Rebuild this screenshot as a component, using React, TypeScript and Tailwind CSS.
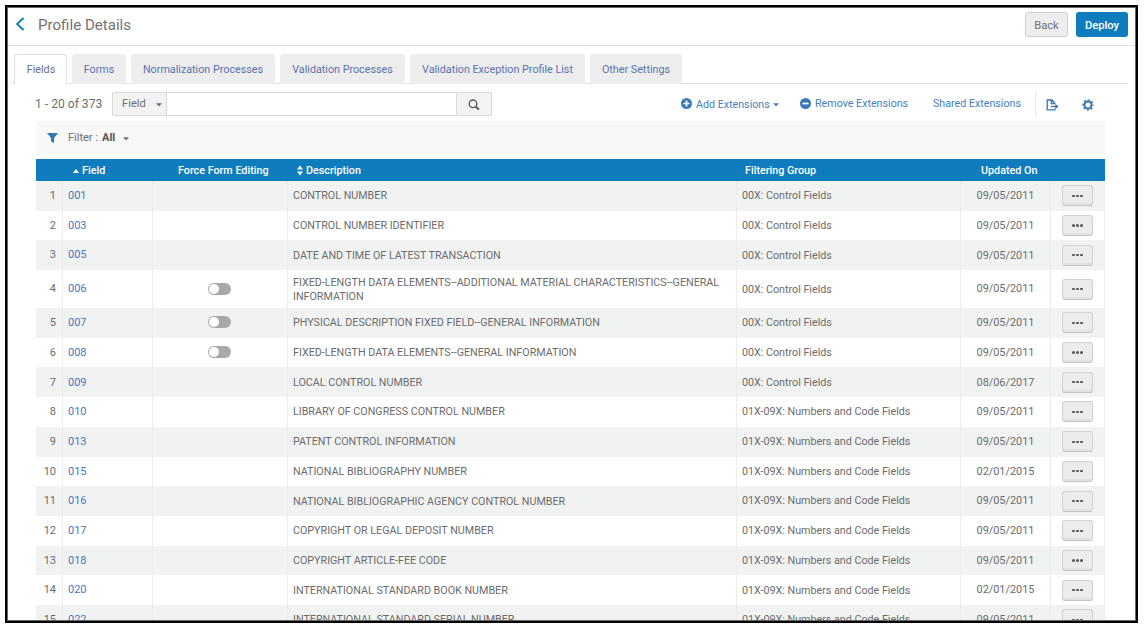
import React from "react";

type Row = { field: string; toggle?: boolean; desc: string; group: string; date: string };

const CONTROL = "00X: Control Fields";
const NUMBERS = "01X-09X: Numbers and Code Fields";

const rows: Row[] = [
  { field: "001", desc: "CONTROL NUMBER", group: CONTROL, date: "09/05/2011" },
  { field: "003", desc: "CONTROL NUMBER IDENTIFIER", group: CONTROL, date: "09/05/2011" },
  { field: "005", desc: "DATE AND TIME OF LATEST TRANSACTION", group: CONTROL, date: "09/05/2011" },
  { field: "006", toggle: true, desc: "FIXED-LENGTH DATA ELEMENTS--ADDITIONAL MATERIAL CHARACTERISTICS--GENERAL INFORMATION", group: CONTROL, date: "09/05/2011" },
  { field: "007", toggle: true, desc: "PHYSICAL DESCRIPTION FIXED FIELD--GENERAL INFORMATION", group: CONTROL, date: "09/05/2011" },
  { field: "008", toggle: true, desc: "FIXED-LENGTH DATA ELEMENTS--GENERAL INFORMATION", group: CONTROL, date: "09/05/2011" },
  { field: "009", desc: "LOCAL CONTROL NUMBER", group: CONTROL, date: "08/06/2017" },
  { field: "010", desc: "LIBRARY OF CONGRESS CONTROL NUMBER", group: NUMBERS, date: "09/05/2011" },
  { field: "013", desc: "PATENT CONTROL INFORMATION", group: NUMBERS, date: "09/05/2011" },
  { field: "015", desc: "NATIONAL BIBLIOGRAPHY NUMBER", group: NUMBERS, date: "02/01/2015" },
  { field: "016", desc: "NATIONAL BIBLIOGRAPHIC AGENCY CONTROL NUMBER", group: NUMBERS, date: "09/05/2011" },
  { field: "017", desc: "COPYRIGHT OR LEGAL DEPOSIT NUMBER", group: NUMBERS, date: "09/05/2011" },
  { field: "018", desc: "COPYRIGHT ARTICLE-FEE CODE", group: NUMBERS, date: "09/05/2011" },
  { field: "020", desc: "INTERNATIONAL STANDARD BOOK NUMBER", group: NUMBERS, date: "02/01/2015" },
  { field: "022", desc: "INTERNATIONAL STANDARD SERIAL NUMBER", group: NUMBERS, date: "09/05/2011" },
];

const tabs = [
  { label: "Forms", width: "w-[54px]" },
  { label: "Normalization Processes", width: "w-[144px]" },
  { label: "Validation Processes", width: "w-[125px]" },
  { label: "Validation Exception Profile List", width: "w-[175px]" },
  { label: "Other Settings", width: "w-[92px]" },
];

const COLS = "grid grid-cols-[27px_90px_135px_449px_224px_90px_54px]";

function Caret({ className = "" }: { className?: string }) {
  return (
    <svg className={className} width="6" height="4" viewBox="0 0 6 4">
      <path d="M0 0.3h6L3 3.5z" fill="currentColor" />
    </svg>
  );
}

function Header() {
  return (
    <header className="flex h-[38px] shrink-0 items-center border-b border-[#e2e2e2] pl-[7px] pr-[7px] pb-[4px]">
      <svg className="-mt-px" width="10" height="14" viewBox="0 0 10 14" fill="none" stroke="#1579b8" strokeWidth="1.9">
        <path d="M8.600 1L2 7l6.600 6" />
      </svg>
      <h1 className="ml-[13px] text-[15.100px] leading-5 text-[#737373]">Profile Details</h1>
      <button className="ml-auto h-[25px] w-[43px] rounded-[3px] border border-[#cfcfcf] bg-[#eee] pt-[3px] text-[11.200px] text-[#737373]">Back</button>
      <button className="ml-2 h-[25px] w-[52px] rounded-[3px] bg-[#0f7dbd] pt-[3px] text-[11.200px] font-medium text-white">Deploy</button>
    </header>
  );
}

function Tabs() {
  return (
    <nav className="ml-1 mr-[7px] mt-2 flex h-[30px] shrink-0 gap-[5px] border-b border-[#ddd] pl-[2px] text-[10.750px] text-[#5c74ac]">
      <div className="-mb-px flex h-[30px] w-[53px] items-center justify-center rounded-t-[3px] border border-b-0 border-[#e2e2e2] bg-white pt-px pl-px text-[#66718c]">Fields</div>
      {tabs.map((t) => (
        <div key={t.label} className={`flex h-[30px] shrink-0 items-center justify-center whitespace-nowrap rounded-t-[3px] bg-[#ededed] pt-[2px] ${t.width}`}>
          {t.label}
        </div>
      ))}
    </nav>
  );
}

function Toolbar() {
  return (
    <div className="mt-2 flex h-6 shrink-0 items-center text-[10.700px] text-[#4580bc]">
      <span className="-ml-px w-[77px] whitespace-nowrap text-[12.100px] text-[#6e6e6e]">1 - 20 of 373</span>
      <div className="flex h-6 w-[380px] overflow-hidden rounded-[2px] border border-[#d8d8d8] text-[#6e6e6e]">
        <div className="flex w-[54px] items-center border-r border-[#d8d8d8] bg-[#f3f3f3] pl-[9px] pt-px text-[11.200px]">
          Field
          <Caret className="ml-[10px]" />
        </div>
        <div className="flex-1 bg-white" />
        <div className="flex w-[35px] items-center justify-center border-l border-[#d8d8d8] bg-[#f3f3f3] pt-px">
          <svg width="12" height="12" viewBox="0 0 12 12" fill="none" stroke="#555">
            <circle cx="5" cy="4.800" r="3.800" strokeWidth="1.300" />
            <path d="M7.900 7.600l3 3" strokeWidth="2" />
          </svg>
        </div>
      </div>
      <div className="ml-[189px] flex w-[119px] items-center whitespace-nowrap">
        <svg width="11" height="11" viewBox="0 0 12 12">
          <circle cx="6" cy="6" r="6" fill="#3a78b8" />
          <path d="M6 2.700v6.600M2.700 6h6.600" stroke="white" strokeWidth="1.800" />
        </svg>
        <span className="ml-1 mt-[2px]">Add Extensions</span>
        <Caret className="ml-[3px] mt-[2px]" />
      </div>
      <div className="flex w-[133px] items-center whitespace-nowrap">
        <svg width="11" height="11" viewBox="0 0 12 12">
          <circle cx="6" cy="6" r="6" fill="#3a78b8" />
          <path d="M2.700 6h6.600" stroke="white" strokeWidth="1.900" />
        </svg>
        <span className="ml-1 mt-px">Remove Extensions</span>
      </div>
      <span className="mt-px w-[102px] whitespace-nowrap">Shared Extensions</span>
      <div className="flex h-6 items-center border-l border-[#e8e8e8] pl-[10px] pt-[2px]">
        <svg width="13" height="12" viewBox="0 0 13 12" fill="none" stroke="#3a78b8" strokeWidth="1.300">
          <path d="M8.800 5V4.300L6 1H1.200v9.800h7.600V9.500M5.300 1v3.600h3.500" />
          <path d="M4.800 7.500h5.700" />
          <path d="M9.300 4.800L12.700 7.500 9.300 10.200z" fill="#3a78b8" stroke="none" />
        </svg>
        <svg className="ml-[23px]" width="12" height="12" viewBox="0 0 12 12" fill="none" stroke="#3a78b8">
          <circle cx="6" cy="6" r="3.500" strokeWidth="2" />
          <circle cx="6" cy="6" r="5" strokeWidth="1.500" strokeDasharray="1.964 1.963" strokeDashoffset="0.980" />
        </svg>
      </div>
    </div>
  );
}

function FilterBar() {
  return (
    <div className="mt-[5px] flex h-[34px] w-[1069px] shrink-0 items-center bg-[#f8f8f8] pl-[11px] text-[11px] text-[#6e6e6e]">
      <svg className="-mt-px" width="11" height="10" viewBox="0 0 11 10">
        <path d="M0 0h11L7 4.900V10L4 8.200V4.900z" fill="#3178b5" />
      </svg>
      <span className="ml-[10px]">Filter :</span>
      <b className="ml-1 mt-px font-bold text-[#555]">All</b>
      <Caret className="ml-[8px] mt-px" />
    </div>
  );
}

function HeaderRow() {
  return (
    <div className={`${COLS} h-[22px] shrink-0 items-center bg-[#0f7dbd] pt-[2px] text-[10.750px] font-medium text-white`}>
      <span />
      <span className="flex items-center pl-[10px]">
        <svg className="mr-[3px] -mt-px" width="6" height="4" viewBox="0 0 6 4"><path d="M0 4h6L3 0z" fill="white" /></svg>
        Field
      </span>
      <span className="pl-[25px]">Force Form Editing</span>
      <span className="flex items-center pl-[9px]">
        <svg className="mr-[3px] -mt-px" width="6" height="11" viewBox="0 0 6 11"><path d="M0 4.500h6L3 0.500zM0 6.500h6L3 10.500z" fill="white" /></svg>
        Description
      </span>
      <span className="pl-2">Filtering Group</span>
      <span className="pl-[20px]">Updated On</span>
      <span />
    </div>
  );
}

function Toggle() {
  return (
    <span className="-mt-px mr-px flex h-3 w-[23px] items-center rounded-full bg-[#a9a9a9] p-px">
      <span className="size-[10px] rounded-full bg-white" />
    </span>
  );
}

function DataRow({ row, index }: { row: Row; index: number }) {
  const cell = "flex items-center border-r border-[#ececec]";
  return (
    <div className={`${COLS} shrink-0 text-[11px] text-[#6c6c6c] ${index === 3 ? "h-[38px]" : "h-[29.700px]"} ${index % 2 === 0 ? "bg-[#f1f3f3]" : "bg-white"}`}>
      <div className={`${cell} justify-end pr-[6px] pt-px`}>{index + 1}</div>
      <div className={`${cell} pl-[5px] pt-px text-[#4b76bf]`}>{row.field}</div>
      <div className={`${cell} justify-center`}>{row.toggle && <Toggle />}</div>
      <div className={`${cell} pl-[5px] pt-px text-[10.730px] leading-[14px]`}>{row.desc}</div>
      <div className={`${cell} pl-[5px] pt-px text-[10.720px]`}>{row.group}</div>
      <div className={`${cell} justify-center pt-px text-[10.900px]`}>{row.date}</div>
      <div className={`${cell} justify-center`}>
        <button className="flex h-[21px] w-[31px] items-center justify-center gap-[1.800px] rounded-[3px] border border-[#d2d2d2] border-b-[#c4c4c4] bg-[#ececec] shadow-[inset_0_-2px_1px_#e2e2e2]">
          <i className="size-[2.300px] rounded-full bg-[#555]" />
          <i className="size-[2.300px] rounded-full bg-[#555]" />
          <i className="size-[2.300px] rounded-full bg-[#555]" />
        </button>
      </div>
    </div>
  );
}

export default function App() {
  return (
    <div className="h-[628px] w-[1144px] overflow-hidden bg-white pl-[5px] pt-[5px] font-['Roboto',sans-serif]">
      <div className="h-[618px] w-[1133px] border-2 border-black">
        <div className="flex h-full flex-col overflow-hidden border border-[#666]">
          <Header />
          <Tabs />
          <main className="flex min-h-0 flex-1 flex-col pl-7">
            <Toolbar />
            <FilterBar />
            <div className="mt-1 flex min-h-0 w-[1069px] flex-col">
              <HeaderRow />
              {rows.map((r, i) => (
                <DataRow key={r.field} row={r} index={i} />
              ))}
            </div>
          </main>
        </div>
      </div>
    </div>
  );
}
